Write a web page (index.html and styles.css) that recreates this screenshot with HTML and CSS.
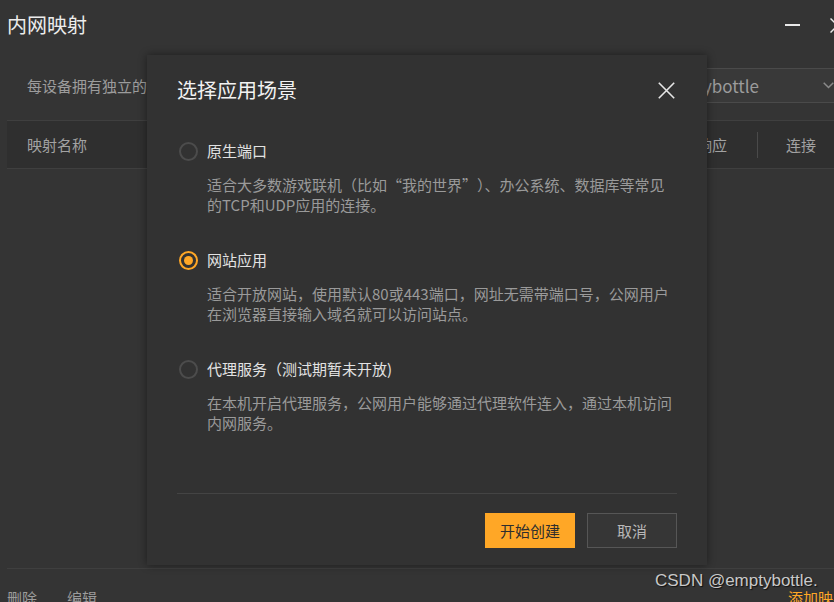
FILE: index.html
```html
<!DOCTYPE html>
<html lang="zh-CN">
<head>
<meta charset="utf-8">
<title>内网映射</title>
<link rel="stylesheet" href="styles.css">
</head>
<body>
<div class="window">
  <div class="titlebar">
    <div class="app-title">内网映射</div>
    <div class="win-controls">
      <span class="win-min"></span>
      <svg class="win-close" width="15" height="15" viewBox="0 0 15 15"><path d="M0.5 0.5 L14.5 14.5 M14.5 0.5 L0.5 14.5" stroke="#e8e8e8" stroke-width="1.5" fill="none"/></svg>
    </div>
  </div>

  <div class="inforow">
    <div class="info-text">每设备拥有独立的内网映射域名，可选择设备进行管理</div>
    <div class="select">
      <span class="select-text">emptybottle</span>
      <svg class="chevron" width="11" height="7" viewBox="0 0 11 7"><path d="M0.7 0.7 L5.5 5.5 L10.3 0.7" stroke="#8a8a8a" stroke-width="1.5" fill="none"/></svg>
    </div>
  </div>

  <div class="thead">
    <div class="th th-name">映射名称</div>
    <div class="th th-resp">响应</div>
    <div class="th-divider"></div>
    <div class="th th-conn">连接</div>
  </div>

  <div class="footer">
    <span class="foot-link">删除</span>
    <span class="foot-link">编辑</span>
    <span class="foot-add">添加映射</span>
  </div>
</div>

<div class="dialog">
  <div class="dlg-head">
    <div class="dlg-title">选择应用场景</div>
    <svg class="dlg-close" width="17" height="17" viewBox="0 0 17 17"><path d="M0.8 0.8 L16.2 16.2 M16.2 0.8 L0.8 16.2" stroke="#e6e6e6" stroke-width="1.6" fill="none"/></svg>
  </div>

  <div class="options">
    <div class="option">
      <div class="opt-row"><span class="radio"></span><span class="opt-label">原生端口</span></div>
      <div class="opt-desc">适合大多数游戏联机（比如<span class="q-open">“</span>我的世界<span class="q-close">”</span>）、办公系统、数据库等常见<br>的TCP和UDP应用的连接。</div>
    </div>
    <div class="option">
      <div class="opt-row"><span class="radio checked"></span><span class="opt-label">网站应用</span></div>
      <div class="opt-desc">适合开放网站，使用默认80或443端口，网址无需带端口号，公网用户<br>在浏览器直接输入域名就可以访问站点。</div>
    </div>
    <div class="option">
      <div class="opt-row"><span class="radio"></span><span class="opt-label">代理服务（测试期暂未开放)</span></div>
      <div class="opt-desc">在本机开启代理服务，公网用户能够通过代理软件连入，通过本机访问<br>内网服务。</div>
    </div>
  </div>

  <div class="dlg-foot">
    <button class="btn btn-primary">开始创建</button>
    <button class="btn btn-cancel">取消</button>
  </div>
</div>

<div class="watermark">CSDN @emptybottle.</div>
</body>
</html>
```

FILE: styles.css
```css
html, body {
  margin: 0;
  padding: 0;
  width: 834px;
  height: 602px;
  overflow: hidden;
  background: #343434;
  font-family: "Noto Sans CJK SC", "Noto Sans", sans-serif;
}

.window {
  width: 850px;
  height: 602px;
  display: flex;
  flex-direction: column;
  padding-left: 7px;
  box-sizing: border-box;
}

.titlebar {
  height: 50px;
  display: flex;
  align-items: center;
}

.app-title {
  font-size: 20px;
  line-height: 28px;
  color: #ececec;
}

.win-controls {
  margin-left: auto;
  display: flex;
  align-items: center;
  gap: 30px;
  padding-right: 5px;
}

.win-min {
  display: block;
  width: 15px;
  height: 1.5px;
  background: #e8e8e8;
}

.win-close {
  display: block;
}

.inforow {
  margin-top: 18px;
  height: 35px;
  display: flex;
  align-items: center;
}

.info-text {
  padding-left: 20px;
  font-size: 15px;
  color: #9c9c9c;
  white-space: nowrap;
}

.select {
  margin-left: auto;
  width: 210px;
  height: 35px;
  box-sizing: border-box;
  background: #393939;
  border-top: 1px solid #4a4a4a;
  border-bottom: 1px solid #4a4a4a;
  display: flex;
  align-items: center;
  justify-content: flex-end;
  padding-right: 16px;
}

.select-text {
  font-size: 17px;
  color: #9c9c9c;
}

.chevron {
  margin-left: 64px;
  display: block;
}

.thead {
  margin-top: 17px;
  height: 49px;
  box-sizing: border-box;
  background: #2f2f2f;
  border-top: 1px solid #3f3f3f;
  border-bottom: 1px solid #3f3f3f;
  display: flex;
  align-items: center;
}

.th {
  font-size: 15px;
  color: #a2a2a2;
}

.th-name {
  padding-left: 20px;
}

.th-resp {
  margin-left: auto;
  padding-right: 30px;
}

.th-divider {
  width: 1px;
  height: 26px;
  background: #4a4a4a;
}

.th-conn {
  padding-left: 28px;
  padding-right: 34px;
}

.footer {
  margin-top: auto;
  border-top: 1px solid #3f3f3f;
  height: 34px;
  box-sizing: border-box;
  padding-top: 19px;
  display: flex;
  align-items: flex-start;
  gap: 30px;
  font-size: 15px;
  line-height: 20px;
  color: #9c9c9c;
}

.foot-add {
  margin-left: auto;
  color: #ffa726;
  padding-right: 2px;
  width: 60px;
  white-space: nowrap;
}

.dialog {
  position: absolute;
  left: 147px;
  top: 55px;
  width: 560px;
  height: 510px;
  box-sizing: border-box;
  background: #323232;
  box-shadow: 0 0 8px rgba(0, 0, 0, 0.45);
  padding: 21px 30px 17px;
  display: flex;
  flex-direction: column;
}

.dlg-head {
  height: 28px;
  display: flex;
  align-items: center;
  justify-content: space-between;
}

.dlg-title {
  font-size: 20px;
  line-height: 28px;
  color: #f2f2f2;
}

.dlg-close {
  display: block;
  margin-right: 2px;
}

.options {
  margin-top: 37px;
  display: flex;
  flex-direction: column;
  gap: 35px;
}

.opt-row {
  height: 20px;
  display: flex;
  align-items: center;
}

.radio {
  width: 19px;
  height: 19px;
  box-sizing: border-box;
  border: 2px solid #4c4c4c;
  border-radius: 50%;
  margin-left: 2px;
  margin-right: 9px;
  display: flex;
  align-items: center;
  justify-content: center;
}

.radio.checked {
  border-color: #ffa726;
}

.radio.checked::after {
  content: "";
  width: 9px;
  height: 9px;
  border-radius: 50%;
  background: #ffa726;
}

.opt-label {
  font-size: 15px;
  line-height: 20px;
  color: #e2e2e2;
}

.opt-desc {
  margin-top: 14px;
  margin-left: 30px;
  font-size: 15px;
  line-height: 20px;
  color: #9a9a9a;
  white-space: nowrap;
}

.q-open,
.q-close {
  display: inline-block;
  width: 15px;
}

.q-open {
  text-align: right;
}

.q-close {
  text-align: left;
}

.dlg-foot {
  margin-top: auto;
  border-top: 1px solid #444444;
  padding-top: 19px;
  display: flex;
  justify-content: flex-end;
  gap: 12px;
}

.btn {
  width: 90px;
  height: 35px;
  box-sizing: border-box;
  font-family: inherit;
  font-size: 15px;
  padding: 0;
  cursor: pointer;
}

.btn-primary {
  background: #ffa726;
  border: none;
  color: #2e2e2e;
}

.btn-cancel {
  background: #363636;
  border: 1px solid #565656;
  color: #b8b8b8;
}

.watermark {
  position: absolute;
  left: 655px;
  top: 570px;
  font-family: "Liberation Sans", Arial, sans-serif;
  font-size: 17px;
  line-height: 22px;
  color: #c9c9c9;
  text-shadow: 1px 1px 1px #111;
}
```
